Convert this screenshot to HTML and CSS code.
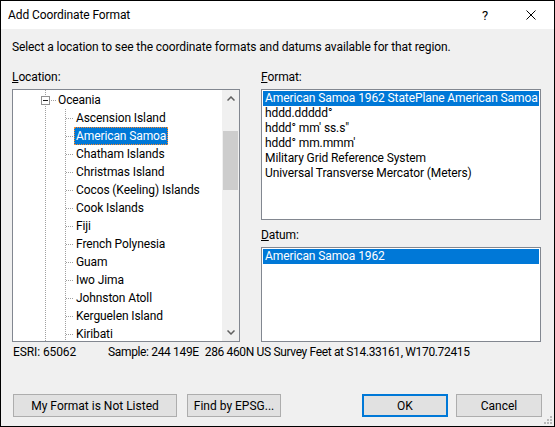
FILE: index.html
```html
<!DOCTYPE html>
<html lang="en">
<head>
    <meta charset="UTF-8">
    <title>Add Coordinate Format</title>
    <link rel="stylesheet" href="styles.css">
</head>
<body>
    <div class="dialog">
        <div class="titlebar">
            <span class="title">Add Coordinate Format</span>
            <span class="caption-btn">?</span>
            <span class="caption-btn">
                <svg width="10" height="10" viewBox="0 0 10 10"><path d="M0.5 0.5 L9.5 9.5 M9.5 0.5 L0.5 9.5" stroke="#000" stroke-width="1" fill="none"/></svg>
            </span>
        </div>
        <div class="content">
            <p class="intro">Select a location to see the coordinate formats and datums available for that region.</p>
            <div class="columns">
                <div class="col-left">
                    <div class="label"><u>L</u>ocation:</div>
                    <div class="tree-box">
                        <div class="tree">
                            <div class="node root">
                                <span class="expander"></span>
                                <span class="stub stub-short"></span>
                                <span class="node-text">Oceania</span>
                            </div>
                            <ul class="children">
                                <li class="node"><span class="stub"></span><span class="node-text">Ascension Island</span></li>
                                <li class="node"><span class="stub"></span><span class="node-text selected">American Samoa</span></li>
                                <li class="node"><span class="stub"></span><span class="node-text">Chatham Islands</span></li>
                                <li class="node"><span class="stub"></span><span class="node-text">Christmas Island</span></li>
                                <li class="node"><span class="stub"></span><span class="node-text">Cocos (Keeling) Islands</span></li>
                                <li class="node"><span class="stub"></span><span class="node-text">Cook Islands</span></li>
                                <li class="node"><span class="stub"></span><span class="node-text">Fiji</span></li>
                                <li class="node"><span class="stub"></span><span class="node-text">French Polynesia</span></li>
                                <li class="node"><span class="stub"></span><span class="node-text">Guam</span></li>
                                <li class="node"><span class="stub"></span><span class="node-text">Iwo Jima</span></li>
                                <li class="node"><span class="stub"></span><span class="node-text">Johnston Atoll</span></li>
                                <li class="node"><span class="stub"></span><span class="node-text">Kerguelen Island</span></li>
                                <li class="node"><span class="stub"></span><span class="node-text">Kiribati</span></li>
                                <li class="node"><span class="stub"></span><span class="node-text">Marshall Islands</span></li>
                            </ul>
                        </div>
                        <div class="vscroll">
                            <div class="arrow">
                                <svg width="8" height="5" viewBox="0 0 8 5"><path d="M0.5 4.5 L4 1 L7.5 4.5" stroke="#606060" stroke-width="1.5" fill="none"/></svg>
                            </div>
                            <div class="track"><div class="thumb"></div></div>
                            <div class="arrow">
                                <svg width="8" height="5" viewBox="0 0 8 5"><path d="M0.5 0.5 L4 4 L7.5 0.5" stroke="#606060" stroke-width="1.5" fill="none"/></svg>
                            </div>
                        </div>
                    </div>
                </div>
                <div class="col-right">
                    <div class="label"><u>F</u>ormat:</div>
                    <ul class="listbox format-list">
                        <li class="selected">American Samoa 1962 StatePlane American Samoa FIPS 5300 (US Feet)</li>
                        <li>hddd.ddddd°</li>
                        <li>hddd° mm' ss.s"</li>
                        <li>hddd° mm.mmm'</li>
                        <li>Military Grid Reference System</li>
                        <li>Universal Transverse Mercator (Meters)</li>
                    </ul>
                    <div class="label datum-label"><u>D</u>atum:</div>
                    <ul class="listbox datum-list">
                        <li class="selected">American Samoa 1962</li>
                    </ul>
                </div>
            </div>
            <div class="status">
                <span class="esri">ESRI: 65062</span>
                <span class="sample">Sample: 244 149E</span>
                <span class="sample sample-rest">286 460N US Survey Feet at S14.33161, W170.72415</span>
            </div>
            <div class="buttons">
                <button class="btn btn-wide">My Format is Not Listed</button>
                <button class="btn btn-epsg">Find by EPSG...</button>
                <span class="spacer"></span>
                <button class="btn btn-ok">OK</button>
                <button class="btn">Cancel</button>
            </div>
        </div>
        <!-- size grip -->
        <svg class="grip" width="9" height="9" viewBox="0 0 9 9">
            <rect x="6" y="0" width="2" height="2" fill="#b9b9b9"/>
            <rect x="3" y="3" width="2" height="2" fill="#b9b9b9"/>
            <rect x="6" y="3" width="2" height="2" fill="#b9b9b9"/>
            <rect x="0" y="6" width="2" height="2" fill="#b9b9b9"/>
            <rect x="3" y="6" width="2" height="2" fill="#b9b9b9"/>
            <rect x="6" y="6" width="2" height="2" fill="#b9b9b9"/>
        </svg>
    </div>
</body>
</html>
```

FILE: styles.css
```css
body { margin: 0; font-family: "Segoe UI", Roboto, "Noto Sans", sans-serif; font-size: 12px; letter-spacing: -0.1px; color: #000; }
.dialog { position: relative; width: 555px; height: 427px; box-sizing: border-box; border: 1px solid #000; background: #f0f0f0; display: flex; flex-direction: column; }

/* title bar */
.titlebar { height: 28px; background: #fff; display: flex; align-items: center; padding-left: 7px; }
.title { flex: 1; }
.caption-btn { width: 46px; height: 28px; display: flex; align-items: center; justify-content: center; font-size: 13px; }

.content { padding: 10px 12px 0 11px; display: flex; flex-direction: column; }
.intro { margin: 0; line-height: 16px; }
.label { line-height: 16px; margin-bottom: 4px; }

.columns { display: flex; gap: 21px; margin-top: 14px; }
.col-left { width: 228px; }
.col-right { width: 280px; display: flex; flex-direction: column; }

/* tree view */
.tree-box { height: 253px; box-sizing: border-box; border: 1px solid #828790; background: #fff; display: flex; }
.tree {
    flex: 1;
    overflow: hidden;
    padding-top: 1px;
    background-image: linear-gradient(#a0a0a0 50%, transparent 50%);
    background-size: 1px 2px;
    background-repeat: repeat-y;
    background-position: 32px 0;
}
.node { display: flex; align-items: center; height: 18px; white-space: nowrap; }
.root { padding-left: 28px; }
.expander { position: relative; width: 9px; height: 9px; box-sizing: border-box; border: 1px solid #919191; background: #fff; }
.expander::after { content: ""; position: absolute; left: 1px; top: 3px; width: 5px; height: 1px; background: #1e1e1e; }
.stub {
    width: 8px; height: 1px;
    background-image: linear-gradient(to right, #a0a0a0 50%, transparent 50%);
    background-size: 2px 1px;
}
.stub-short { width: 5px; margin-left: 1px; }
.node-text { line-height: 18px; padding: 0 2px; }
.node-text.selected { background: #0078d7; color: #fff; outline: 1px dotted #ff8a2a; outline-offset: -1px; }
.children {
    list-style: none; margin: 0; padding: 0 0 0 53px;
    background-image: linear-gradient(#a0a0a0 50%, transparent 50%);
    background-size: 1px 2px;
    background-repeat: repeat-y;
    background-position: 52px 0;
}

/* scroll bar */
.vscroll { width: 17px; background: #f0f0f0; display: flex; flex-direction: column; }
.arrow { height: 17px; display: flex; align-items: center; justify-content: center; }
.track { flex: 1; }
.thumb { height: 59px; margin: 24px 1px 0 1px; background: #cdcdcd; }

/* list boxes */
.listbox { list-style: none; margin: 0; padding: 1px; box-sizing: border-box; border: 1px solid #828790; background: #fff; overflow: hidden; }
.listbox li { height: 15px; line-height: 15px; padding-left: 2px; white-space: nowrap; overflow: hidden; }
.listbox li.selected { background: #0078d7; color: #fff; }
.format-list { height: 131px; }
.datum-label { margin-top: 7px; }
.datum-list { height: 95px; }

.status { display: flex; gap: 6px; line-height: 16px; margin-top: 2px; padding-left: 1px; white-space: nowrap; }
.esri { width: 89px; }
.sample { letter-spacing: -0.35px; }

/* buttons */
.buttons { display: flex; margin-top: 34px; padding-left: 1px; }
.spacer { flex: 1; }
.btn { height: 23px; box-sizing: border-box; border: 1px solid #adadad; background: #e1e1e1; font: inherit; color: #000; padding: 0; width: 86px; margin-left: 8px; }
.btn-wide { width: 164px; margin-left: 0; }
.btn-epsg { width: 94px; margin-left: 10px; }
.btn-ok { border: 2px solid #0078d7; }

.grip { position: absolute; right: 1px; bottom: 1px; }
```
